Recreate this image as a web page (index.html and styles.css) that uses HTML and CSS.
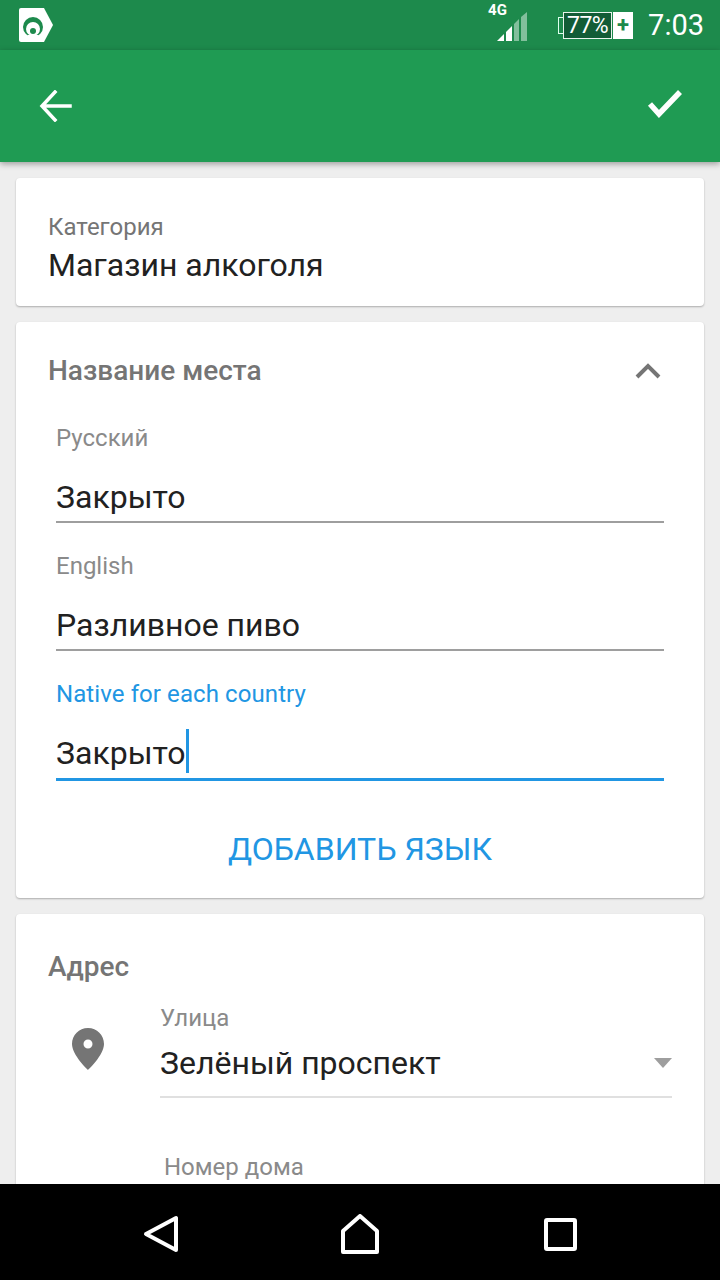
FILE: index.html
```html
<!DOCTYPE html>
<html lang="ru">
<head>
<meta charset="utf-8">
<title>Редактирование места</title>
<link rel="stylesheet" href="styles.css">
</head>
<body>
<div class="screen">
  <div class="status">
    <svg class="app-logo" width="36" height="36" viewBox="0 0 36 36"><path fill="#fff" d="M3 1H26L35 18 26 35H3Q1 35 1 33V3Q1 1 3 1Z"/><circle cx="15" cy="20" r="10" fill="#1d8a4c"/><circle cx="15" cy="22" r="7" fill="#fff"/><circle cx="15" cy="24" r="3" fill="#1d8a4c"/><path fill="#fff" d="M10 28H20V31H10Z"/></svg>
    <div class="status-right">
      <div class="signal">
        <span class="net">4G</span>
        <svg width="30" height="30" viewBox="0 0 30 30"><path fill="#fff" d="M0 29 7 22V29Z"/><path fill="#fff" d="M9 20 15 14V29H9Z"/><path fill="#fff" opacity=".45" d="M17 12 22 7V29H17Z"/><path fill="#fff" opacity=".45" d="M24 5 30 0V29H24Z"/></svg>
      </div>
      <div class="battery">
        <span class="batt-nub"></span>
        <span class="batt-body">77%</span>
        <span class="batt-plus">+</span>
      </div>
      <span class="clock">7:03</span>
    </div>
  </div>
  <header class="appbar">
    <svg width="34" height="32" viewBox="0 0 34 32"><path fill="none" stroke="#fff" stroke-width="3.500" stroke-linecap="square" d="M31 16H4M16 2 3 16 16 30"/></svg>
    <svg width="36" height="28" viewBox="0 0 36 28"><path fill="none" stroke="#fff" stroke-width="5.500" d="M3 14 12 24 33 2"/></svg>
  </header>
  <main class="content">
    <section class="card card-category">
      <div class="label">Категория</div>
      <div class="value">Магазин алкоголя</div>
    </section>
    <section class="card card-name">
      <div class="card-head">
        <h2 class="title">Название места</h2>
        <svg class="chevron" width="26" height="16" viewBox="0 0 26 16"><path fill="none" stroke="#757575" stroke-width="4" d="M2 14 13 3 24 14"/></svg>
      </div>
      <div class="field">
        <div class="label">Русский</div>
        <div class="input">Закрыто</div>
      </div>
      <div class="field">
        <div class="label">English</div>
        <div class="input">Разливное пиво</div>
      </div>
      <div class="field field-active">
        <div class="label">Native for each country</div>
        <div class="input">Закрыто<span class="caret"></span></div>
      </div>
      <div class="add-lang">ДОБАВИТЬ ЯЗЫК</div>
    </section>
    <section class="card card-address">
      <h2 class="title">Адрес</h2>
      <div class="addr-row">
        <svg class="pin" width="34" height="44" viewBox="0 0 34 44"><path fill="#757575" fill-rule="evenodd" d="M17 1C8 1 1 8 1 17 1 28 17 43 17 43S33 28 33 17C33 8 26 1 17 1ZM17 12.500A4.500 4.500 0 1 1 17 21.500 4.500 4.500 0 1 1 17 12.500Z"/></svg>
        <div class="addr-fields">
          <div class="label">Улица</div>
          <div class="select">
            <span>Зелёный проспект</span>
            <span class="arrow"></span>
          </div>
          <div class="label house">Номер дома</div>
        </div>
      </div>
    </section>
  </main>
  <nav class="navbar">
    <svg width="36" height="38" viewBox="0 0 36 38"><path fill="none" stroke="#fff" stroke-width="4" stroke-linejoin="round" d="M33 3V35L3 19Z"/></svg>
    <svg class="nav-home" width="38" height="40" viewBox="0 0 38 40"><path fill="none" stroke="#fff" stroke-width="4" stroke-linejoin="round" d="M2 17 19 2 36 17V38H2Z"/></svg>
    <svg width="33" height="33" viewBox="0 0 33 33"><rect x="2" y="2" width="29" height="29" rx="1" fill="none" stroke="#fff" stroke-width="4"/></svg>
  </nav>
</div>
</body>
</html>
```
FILE: styles.css
```css
* { box-sizing: border-box; }
html, body { margin: 0; padding: 0; }
body { font-family: Roboto, "Noto Sans", sans-serif; }
.screen { width: 720px; height: 1280px; display: flex; flex-direction: column; overflow: hidden; background: #eeeeee; }
.status { height: 50px; flex: none; background: #1d8a4c; display: flex; align-items: center; justify-content: space-between; padding-left: 18px; padding-right: 16px; color: #fff; }
.app-logo { flex: none; }
.status-right { display: flex; align-items: center; }
.signal { position: relative; width: 30px; height: 42px; margin-right: 31px; padding-bottom: 4px; display: flex; align-items: flex-end; }
.net { position: absolute; left: -9px; top: -2px; font-size: 15px; font-weight: 700; line-height: 16px; }
.battery { display: flex; align-items: center; height: 27px; margin-right: 15px; }
.batt-nub { width: 5px; height: 17px; border: 1px solid #dfe; border-right: 0; }
.batt-body { width: 49px; height: 27px; background: #125c36; border: 1px solid #e8f3ec; font-size: 23px; line-height: 25px; text-align: center; letter-spacing: -0.5px; }
.batt-plus { width: 20px; height: 27px; margin-left: 1px; background: #fff; color: #1d8a4c; font-size: 22px; font-weight: 700; line-height: 25px; text-align: center; }
.clock { font-size: 29px; line-height: 34px; }
.appbar { height: 112px; flex: none; background: #1f9b53; display: flex; justify-content: space-between; align-items: flex-start; padding: 40px 37px 0 39px; box-shadow: 0 2px 6px rgba(0,0,0,.35); position: relative; z-index: 1; }
.content { flex: 1; min-height: 0; overflow: hidden; padding: 16px 16px 0; display: flex; flex-direction: column; gap: 16px; }
.card { flex: none; background: #fff; border-radius: 4px; box-shadow: 0 1px 2px rgba(0,0,0,.28); }
.card-category { height: 128px; padding: 33px 32px 0; }
.label { font-size: 24px; line-height: 32px; color: #8a8a8a; }
.card-category .label { color: #757575; }
.value { font-size: 32px; line-height: 42px; margin-top: 1px; color: #212121; }
.card-name { height: 576px; padding: 30px 40px 0; }
.card-head { display: flex; justify-content: space-between; align-items: center; margin-left: -8px; height: 38px; }
.chevron { margin-right: 3px; margin-top: -1px; }
.title { margin: 0; font-size: 28px; line-height: 38px; font-weight: 500; color: #757575; }
.field { height: 114px; }
.card-head + .field { margin-top: 32px; }
.input { font-size: 32px; line-height: 44px; height: 58px; padding-top: 10px; margin-top: 11px; color: #212121; border-bottom: 2px solid #9e9e9e; }
.field + .field { margin-top: 14px; }
.field-active .label { color: #2196e3; letter-spacing: 0.09px; }
.field-active .input { height: 60px; border-bottom: 3px solid #2196e3; }
.caret { display: inline-block; width: 3px; height: 44px; margin-top: -2px; background: #2196e3; vertical-align: top; }
.add-lang { margin-top: 37px; text-align: center; font-size: 32px; line-height: 40px; color: #2196e3; }
.card-address { height: 400px; padding: 33px 32px 0; }
.card-address .title { line-height: 40px; }
.addr-row { display: flex; margin-top: 15px; }
.pin { flex: none; margin: 25px 0 0 23px; }
.addr-fields { flex: 1; margin-left: 55px; }
.select { display: flex; justify-content: space-between; align-items: center; height: 64px; font-size: 32px; color: #212121; border-bottom: 2px solid #e0e0e0; padding-bottom: 4px; }
.arrow { width: 0; height: 0; border-left: 9px solid transparent; border-right: 9px solid transparent; border-top: 10px solid #9e9e9e; }
.house { margin-top: 53px; margin-left: 4px; }
.navbar { height: 96px; flex: none; background: #000; display: flex; justify-content: space-between; align-items: center; padding: 4px 143px 0 143px; position: relative; z-index: 1; }
.nav-home { margin-right: 3px; }
```
